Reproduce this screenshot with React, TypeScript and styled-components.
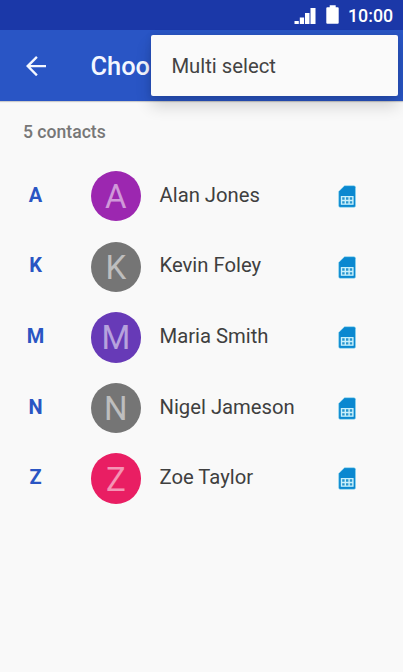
import React from 'react';
import styled, { createGlobalStyle } from 'styled-components';

const GlobalStyle = createGlobalStyle`
  * { box-sizing: border-box; }
  body { margin: 0; background: #f9f9f9; font-family: Roboto, "Noto Sans", sans-serif; overflow: hidden; }
`;

const Screen = styled.div`
  position: relative;
  display: flex;
  flex-direction: column;
  width: 403px;
  height: 672px;
  background: #f9f9f9;
  overflow: hidden;
`;

const StatusBar = styled.header`
  display: flex;
  justify-content: flex-end;
  align-items: flex-start;
  height: 30px;
  padding-right: 10px;
  background: #1b38a8;
  color: #fff;
`;

const StatusIcons = styled.svg`
  width: 46px;
  height: 30px;
  margin-right: 8px;
`;

const Clock = styled.span`
  width: 45px;
  font-size: 17.8px;
  font-weight: 500;
  line-height: 32px;
  white-space: nowrap;
`;

const AppBar = styled.div`
  display: flex;
  align-items: center;
  height: 70.6px;
  padding-left: 25.5px;
  background: #2955c5;
  color: #f4f7ff;
  box-shadow: 0 1px 1px rgba(0, 0, 0, 0.18);
`;

const BackArrow = styled.svg`
  width: 20.2px;
  height: 20.2px;
  margin-top: 0.6px;
`;

const Title = styled.h1`
  margin: 1.6px 0 0 44.8px;
  font-size: 25.4px;
  font-weight: 500;
  line-height: 30px;
  white-space: nowrap;
`;

const Menu = styled.div`
  position: absolute;
  top: 35px;
  right: 5px;
  display: flex;
  align-items: center;
  width: 247px;
  height: 61px;
  padding-left: 20.4px;
  border-radius: 2px;
  background: #fafafa;
  box-shadow: 0 10px 16px rgba(0, 0, 0, 0.16), 0 0 6px rgba(0, 0, 0, 0.1);
`;

const MenuItem = styled.span`
  color: #434343;
  font-size: 20.3px;
  line-height: 24px;
`;

const Count = styled.div`
  height: 60.4px;
  padding: 19.4px 0 0 23px;
  color: #777;
  font-size: 17.6px;
  font-weight: 500;
  line-height: 24px;
`;

const List = styled.ul`
  margin: 0;
  padding: 0;
  list-style: none;
`;

const Row = styled.li`
  display: grid;
  grid-template-columns: 71px 50px 1fr 18px;
  align-items: center;
  height: 70.6px;
  padding-right: 47px;
`;

const Section = styled.span`
  padding-bottom: 3px;
  color: #2a55c3;
  font-size: 20px;
  font-weight: 700;
  line-height: 24px;
  text-align: center;
`;

const SectionCell = styled.div`
  display: flex;
  justify-content: center;
`;

const Avatar = styled.span<{ $color: string }>`
  display: flex;
  align-items: center;
  justify-content: center;
  width: 50.4px;
  height: 50.4px;
  margin-left: 19.6px;
  border-radius: 50%;
  background: ${({ $color }) => $color};
  color: rgba(255, 255, 255, 0.53);
  font-size: 33px;
  line-height: 38px;
  padding-top: 2px;
`;

const Name = styled.span`
  padding: 0 0 3px 38.5px;
  color: #3f3f3f;
  font-size: 20.25px;
  line-height: 24px;
  white-space: nowrap;
`;

const SimSvg = styled.svg`
  width: 18px;
  height: 23px;
  margin-top: 0.6px;
`;

const SimIcon = () => (
  <SimSvg viewBox="0 0 18 23">
    <path d="M6.5 .7H16Q17.5 .7 17.5 2.2V20.8Q17.5 22.3 16 22.3H2.2Q.7 22.3 .7 20.8V6.5Z" fill="#0a88d0" stroke="#8fdcf3" strokeWidth=".5" />
    <rect x="2.8" y="11" width="12.8" height="8.8" fill="#c9f0fb" />
    <path d="M4.2 12.3h2.4v2.4H4.2zM8 12.3h2.4v2.4H8zM11.8 12.3h2.4v2.4h-2.4zM4.2 16.2h2.4v2.4H4.2zM8 16.2h2.4v2.4H8zM11.8 16.2h2.4v2.4h-2.4z" fill="#2795ce" />
  </SimSvg>
);

const contacts = [
  { name: 'Alan Jones', color: '#9c27b0' },
  { name: 'Kevin Foley', color: '#757575' },
  { name: 'Maria Smith', color: '#673ab7' },
  { name: 'Nigel Jameson', color: '#757575' },
  { name: 'Zoe Taylor', color: '#e91e63' },
];

export default function App() {
  return (
    <Screen>
      <GlobalStyle />
      <StatusBar>
        <StatusIcons viewBox="0 0 46 30" fill="#fff">
          <path d="M.5 21h4.3v3H.5zM5.8 17.5h4.3V24H5.8zM11 13h4.5v11H11zM16.5 8h5v16h-5z" />
          <path d="M35.7 7.3V5.2h6v2.1h2q1 0 1 1v14.5q0 1-1 1H33.3q-1 0-1-1V8.3q0-1 1-1z" />
        </StatusIcons>
        <Clock>10:00</Clock>
      </StatusBar>
      <AppBar>
        <BackArrow viewBox="4 4 16 16" fill="#f4f7ff">
          <path d="M20 11.1H7.6l5.7-5.7L12 4l-8 8 8 8 1.3-1.4L7.6 12.9H20z" />
        </BackArrow>
        <Title>Choo</Title>
      </AppBar>
      <Count>5 contacts</Count>
      <List>
        {contacts.map(({ name, color }) => (
          <Row key={name}>
            <SectionCell><Section>{name[0]}</Section></SectionCell>
            <Avatar $color={color}>{name[0]}</Avatar>
            <Name>{name}</Name>
            <SimIcon />
          </Row>
        ))}
      </List>
      <Menu><MenuItem>Multi select</MenuItem></Menu>
    </Screen>
  );
}
